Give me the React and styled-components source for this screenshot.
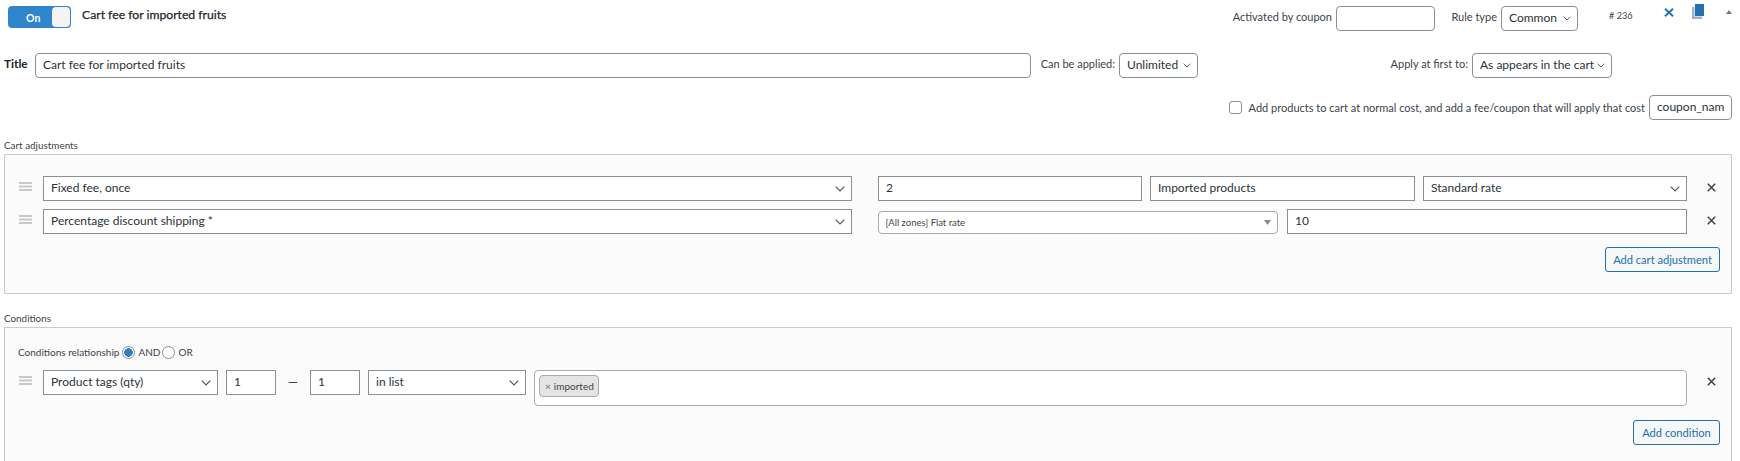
import React from "react";
import styled, { createGlobalStyle } from "styled-components";

const FONT = `Lato, "Open Sans", "Liberation Sans", sans-serif`;
const chevron = encodeURIComponent(
  '<svg xmlns="http://www.w3.org/2000/svg" width="10" height="6" viewBox="0 0 10 6"><path d="M.7.7 5 5 9.3.7" fill="none" stroke="#50575e" stroke-width="1.2"/></svg>'
);
const caret = encodeURIComponent(
  '<svg xmlns="http://www.w3.org/2000/svg" width="7" height="5"><path d="M0 0h7L3.5 5z" fill="#888"/></svg>'
);

const Global = createGlobalStyle`
  html, body { margin: 0; height: 461px; overflow: hidden; background: #fff; }
  body { font-family: ${FONT}; font-size: 12px; color: #3c434a; }
  * { box-sizing: border-box; }
`;

const Page = styled.div`
  width: 1740px;
  padding: 0 8px 0 4px;
`;

const TopBar = styled.div`
  display: flex;
  align-items: flex-start;
  height: 47px;
  margin-top: 6px;
`;

const Toggle = styled.div`
  display: flex;
  align-items: center;
  width: 63px;
  height: 22px;
  margin-left: 4px;
  padding: 3px 1px 1px 18px;
  background: #2f86cc;
  border-radius: 4px;
  color: #fff;
  font-size: 10.5px;
  font-weight: 700;
`;

const Knob = styled.span`
  width: 18px;
  height: 20px;
  margin: -2px 0 0 auto;
  background: #f4f4f4;
  border-radius: 4px;
`;

const RuleName = styled.div`
  margin-left: 11px;
  font-size: 12.2px;
  line-height: 18px;
  color: #23282d;
  -webkit-text-stroke: 0.25px #23282d;
`;

const FieldLabel = styled.label`
  flex: none;
  width: ${(p) => p.$w}px;
  margin-left: ${(p) => p.$ml || 0}px;
  margin-right: 4px;
  font-size: 11px;
  line-height: 22px;
  text-align: right;
  white-space: nowrap;
`;

const TextInput = styled.input`
  flex: none;
  width: ${(p) => p.$w}px;
  height: 25px;
  padding: 0 7px 2px;
  background: #fff;
  border: 1px solid #8c8f94;
  border-radius: ${(p) => (p.$square ? 0 : 4)}px;
  outline: none;
  font-family: ${FONT};
  font-size: 12px;
  color: #2c3338;
`;

const Select = styled.select`
  flex: none;
  width: ${(p) => p.$w}px;
  height: 25px;
  margin: 0;
  padding: 0 12px 2px 7px;
  appearance: none;
  background: #fff url("data:image/svg+xml,${chevron}") no-repeat right 6px center;
  background-size: ${(p) => (p.$square ? "10px 6px" : "8px 5px")};
  border: 1px solid #8c8f94;
  border-radius: ${(p) => (p.$square ? 0 : 4)}px;
  outline: none;
  font-family: ${FONT};
  font-size: 12px;
  color: #2c3338;
`;

const ZoneSelect = styled.select`
  flex: none;
  width: 400.5px;
  height: 23px;
  margin: 2px 9px 0 25.5px;
  padding: 0 20px 0 7px;
  appearance: none;
  background: #fff url("data:image/svg+xml,${caret}") no-repeat right 6px center;
  border: 1px solid #aaa;
  border-radius: 4px;
  outline: none;
  font-family: ${FONT};
  font-size: 9.5px;
  color: #444;
`;

const RuleId = styled.div`
  width: 22px;
  margin-left: 31px;
  font-size: 9.2px;
  line-height: 20px;
  white-space: nowrap;
`;

const IconSlot = styled.span`
  display: flex;
  flex: none;
  margin-left: ${(p) => p.$ml || 0}px;
  margin-top: ${(p) => p.$mt || 0}px;
  margin-right: ${(p) => p.$mr || 0}px;
`;

const Push = styled.div`
  margin-left: auto;
`;

const TitleRow = styled.div`
  display: flex;
  align-items: flex-start;
  height: 25px;
  margin-bottom: 17px;
`;

const TitleLabel = styled.label`
  flex: none;
  width: 31px;
  font-size: 11.8px;
  font-weight: 700;
  line-height: 22px;
  color: #1d2327;
`;

const OptionRow = styled.div`
  display: flex;
  align-items: center;
  justify-content: flex-end;
  height: 25px;
`;

const Check = styled.input`
  flex: none;
  width: 13px;
  height: 13px;
  margin: 0 7px 0 0;
  appearance: none;
  background: #fff;
  border: 1px solid #8c8f94;
  border-radius: 3px;
`;

const OptionText = styled.label`
  margin-right: 4px;
  font-size: 11px;
  line-height: 20px;
  white-space: nowrap;
`;

const SectionLabel = styled.div`
  height: 15px;
  margin-top: ${(p) => p.$mt}px;
  font-size: 9.9px;
  line-height: 13px;
`;

const Panel = styled.section`
  height: ${(p) => p.$h}px;
  padding: ${(p) => p.$pt}px 11px 0 14px;
  background: #fbfbfb;
  border: 1px solid #ccc;
`;

const Row = styled.div`
  display: flex;
  align-items: flex-start;
  margin-top: ${(p) => p.$mt || 0}px;
  padding-right: 4px;
`;

const Relation = styled.div`
  display: flex;
  align-items: center;
  height: 14px;
  margin-left: -1px;
  font-size: 10px;
  white-space: nowrap;
`;

const Radio = styled.input`
  flex: none;
  width: 13px;
  height: 13px;
  margin: 0 ${(p) => p.$mr}px 0 ${(p) => p.$ml}px;
  appearance: none;
  background: #fff;
  border: 1px solid #8c8f94;
  border-radius: 50%;
  &:checked {
    background: radial-gradient(circle, #2f7fc4 0 4px, #fff 4.6px);
  }
`;

const Dash = styled.span`
  flex: none;
  width: 34px;
  font-size: 13px;
  line-height: 25px;
  text-align: center;
`;

const TagBox = styled.div`
  flex: none;
  width: 1153px;
  height: 36px;
  margin-left: 8px;
  padding: 4px;
  background: #fff;
  border: 1px solid #aaa;
  border-radius: 4px;
`;

const Tag = styled.span`
  display: inline-flex;
  align-items: center;
  gap: 3px;
  width: 60px;
  height: 22px;
  padding-left: 5px;
  background: #e4e4e4;
  border: 1px solid #aaa;
  border-radius: 4px;
  font-size: 10px;
  color: #444;
`;

const TagX = styled.span`
  color: #888;
  font-weight: 700;
`;

const Gap = styled.span`
  flex: none;
  width: ${(p) => p.$w}px;
`;

const Actions = styled.div`
  display: flex;
  justify-content: flex-end;
  margin-top: ${(p) => p.$mt}px;
`;

const OutlineButton = styled.button`
  width: ${(p) => p.$w}px;
  height: 25px;
  padding: 0;
  background: #f6f7f7;
  border: 1px solid #2271b1;
  border-radius: 3px;
  font-family: ${FONT};
  font-size: 11.1px;
  color: #2271b1;
`;

const Handle = () => (
  <IconSlot $mt={6} $mr={11}>
    <svg width="13" height="9" viewBox="0 0 13 9">
      <path d="M0 0h13v2H0zM0 3.5h13v2H0zM0 7h13v2H0z" fill="#c9c9c9" />
    </svg>
  </IconSlot>
);

const RemoveX = () => (
  <IconSlot $ml={20} $mt={7}>
    <svg width="9" height="9" viewBox="0 0 9 9">
      <path d="M.8.8l7.4 7.4M8.2.8.8 8.2" stroke="#3c434a" strokeWidth="1.5" fill="none" />
    </svg>
  </IconSlot>
);

const noop = () => {};

function Sel({ value, w, square }) {
  return (
    <Select value={value} onChange={noop} $w={w} $square={square}>
      <option>{value}</option>
    </Select>
  );
}

const Txt = ({ value, w, square }) => (
  <TextInput type="text" value={value} readOnly $w={w} $square={square} />
);

export default function App() {
  return (
    <Page>
      <Global />
      <TopBar>
        <Toggle>
          On
          <Knob />
        </Toggle>
        <RuleName>Cart fee for imported fruits</RuleName>
        <Push />
        <FieldLabel $w={100}>Activated by coupon</FieldLabel>
        <Txt value="" w={99} />
        <FieldLabel $w={46} $ml={16}>Rule type</FieldLabel>
        <Sel value="Common" w={77} />
        <RuleId># 236</RuleId>
        <IconSlot $ml={33} $mt={2}>
          <svg width="10" height="9" viewBox="0 0 10 9">
            <path d="M1 .8l8 7.400M9 .8 1 8.200" stroke="#2271b1" strokeWidth="2" fill="none" />
          </svg>
        </IconSlot>
        <IconSlot $ml={18} $mt={-2}>
          <svg width="12" height="15" viewBox="0 0 12 15">
            <path d="M0 3h2.500v9.500H10V15H0z" fill="#9db4cc" />
            <path d="M3 0h9v12H3z" fill="#2271b1" />
          </svg>
        </IconSlot>
        <IconSlot $ml={22} $mt={4}>
          <svg width="6" height="4" viewBox="0 0 6 4">
            <path d="M0 4 3 0l3 4z" fill="#72777c" />
          </svg>
        </IconSlot>
      </TopBar>

      <TitleRow>
        <TitleLabel>Title</TitleLabel>
        <Txt value="Cart fee for imported fruits" w={996} />
        <FieldLabel $w={84}>Can be applied:</FieldLabel>
        <Sel value="Unlimited" w={79} />
        <FieldLabel $w={80} $ml={190}>Apply at first to:</FieldLabel>
        <Sel value="As appears in the cart" w={140} />
      </TitleRow>

      <OptionRow>
        <Check type="checkbox" />
        <OptionText>Add products to cart at normal cost, and add a fee/coupon that will apply that cost</OptionText>
        <Txt value="coupon_name" w={83} />
      </OptionRow>

      <SectionLabel $mt={19}>Cart adjustments</SectionLabel>
      <Panel $h={140} $pt={21}>
        <Row>
          <Handle />
          <Sel value="Fixed fee, once" w={809} square />
          <Gap $w={26} />
          <Txt value="2" w={264} square />
          <Gap $w={8} />
          <Txt value="Imported products" w={265} square />
          <Gap $w={8} />
          <Sel value="Standard rate" w={264} square />
          <RemoveX />
        </Row>
        <Row $mt={8}>
          <Handle />
          <Sel value="Percentage discount shipping *" w={809} square />
          <ZoneSelect value="[All zones] Flat rate" onChange={noop}>
            <option>[All zones] Flat rate</option>
          </ZoneSelect>
          <Txt value="10" w={400} square />
          <RemoveX />
        </Row>
        <Actions $mt={13}>
          <OutlineButton $w={115}>Add cart adjustment</OutlineButton>
        </Actions>
      </Panel>

      <SectionLabel $mt={18}>Conditions</SectionLabel>
      <Panel $h={200} $pt={17}>
        <Relation>
          Conditions relationship
          <Radio type="radio" name="rel" defaultChecked $ml={3} $mr={3} />
          AND
          <Radio type="radio" name="rel" $ml={2} $mr={3} />
          OR
        </Relation>
        <Row $mt={11}>
          <Handle />
          <Sel value="Product tags (qty)" w={175} square />
          <Gap $w={8} />
          <Txt value="1" w={50} square />
          <Dash>—</Dash>
          <Txt value="1" w={50} square />
          <Gap $w={8} />
          <Sel value="in list" w={158} square />
          <TagBox>
            <Tag>
              <TagX>×</TagX>imported
            </Tag>
          </TagBox>
          <RemoveX />
        </Row>
        <Actions $mt={14}>
          <OutlineButton $w={87}>Add condition</OutlineButton>
        </Actions>
      </Panel>
    </Page>
  );
}
